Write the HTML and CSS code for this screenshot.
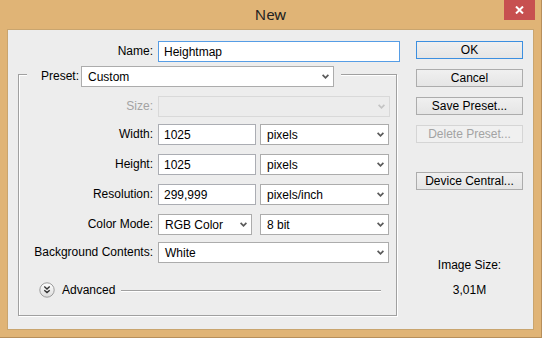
FILE: index.html
```html
<!DOCTYPE html>
<html>
<head>
  <title>New</title>
  <link rel="stylesheet" href="styles.css">
</head>
<body>
  <div class="window">
    <div class="titlebar">
      <span></span>
      <div class="title">New</div>
      <button class="close" title="Close">
        <svg width="9" height="8" viewBox="0 0 9 8"><path d="M1 0.5 L8 7.5 M8 0.5 L1 7.5" stroke="#fff" stroke-width="2"/></svg>
      </button>
    </div>

    <div class="client">
      <div class="form">
        <div class="row">
          <label class="lbl name-lbl">Name:</label>
          <input class="text focus name-input" value="Heightmap">
        </div>

        <fieldset class="group">
          <legend class="preset">
            <label class="preset-lbl">Preset:</label>
            <div class="combo w-preset">
              <span>Custom</span>
              <svg class="chev" width="7" height="5" viewBox="0 0 7 5"><path d="M0.6 0.8 L3.5 3.8 L6.4 0.8" fill="none" stroke="#5a5a5a" stroke-width="1.7"/></svg>
            </div>
          </legend>

          <div class="row r-size">
            <label class="lbl disabled">Size:</label>
            <div class="combo w-full disabled">
              <span></span>
              <svg class="chev" width="7" height="5" viewBox="0 0 7 5"><path d="M0.6 0.8 L3.5 3.8 L6.4 0.8" fill="none" stroke="#c4c4c4" stroke-width="1.7"/></svg>
            </div>
          </div>

          <div class="row r-tight">
            <label class="lbl">Width:</label>
            <input class="text w-num" value="1025">
            <div class="combo w-unit">
              <span>pixels</span>
              <svg class="chev" width="7" height="5" viewBox="0 0 7 5"><path d="M0.6 0.8 L3.5 3.8 L6.4 0.8" fill="none" stroke="#5a5a5a" stroke-width="1.7"/></svg>
            </div>
          </div>

          <div class="row r-wide">
            <label class="lbl">Height:</label>
            <input class="text w-num" value="1025">
            <div class="combo w-unit">
              <span>pixels</span>
              <svg class="chev" width="7" height="5" viewBox="0 0 7 5"><path d="M0.6 0.8 L3.5 3.8 L6.4 0.8" fill="none" stroke="#5a5a5a" stroke-width="1.7"/></svg>
            </div>
          </div>

          <div class="row r-wide">
            <label class="lbl">Resolution:</label>
            <input class="text w-num" value="299,999">
            <div class="combo w-unit">
              <span>pixels/inch</span>
              <svg class="chev" width="7" height="5" viewBox="0 0 7 5"><path d="M0.6 0.8 L3.5 3.8 L6.4 0.8" fill="none" stroke="#5a5a5a" stroke-width="1.7"/></svg>
            </div>
          </div>

          <div class="row r-wide">
            <label class="lbl">Color Mode:</label>
            <div class="combo w-mode">
              <span>RGB Color</span>
              <svg class="chev" width="7" height="5" viewBox="0 0 7 5"><path d="M0.6 0.8 L3.5 3.8 L6.4 0.8" fill="none" stroke="#5a5a5a" stroke-width="1.7"/></svg>
            </div>
            <div class="combo w-unit">
              <span>8 bit</span>
              <svg class="chev" width="7" height="5" viewBox="0 0 7 5"><path d="M0.6 0.8 L3.5 3.8 L6.4 0.8" fill="none" stroke="#5a5a5a" stroke-width="1.7"/></svg>
            </div>
          </div>

          <div class="row r-tight">
            <label class="lbl">Background Contents:</label>
            <div class="combo w-bg">
              <span>White</span>
              <svg class="chev" width="7" height="5" viewBox="0 0 7 5"><path d="M0.6 0.8 L3.5 3.8 L6.4 0.8" fill="none" stroke="#5a5a5a" stroke-width="1.7"/></svg>
            </div>
          </div>

          <div class="advanced">
            <svg class="adv-icon" width="16" height="16" viewBox="0 0 16 16">
              <defs>
                <linearGradient id="advFill" x1="0" y1="0" x2="0" y2="1">
                  <stop offset="0" stop-color="#ffffff"/>
                  <stop offset="1" stop-color="#dcdcdc"/>
                </linearGradient>
              </defs>
              <circle cx="8" cy="8" r="7.2" fill="url(#advFill)" stroke="#9c9c9c" stroke-width="1"/>
              <path d="M5.3 4.6 L8 7 L10.7 4.6 M5.3 8.2 L8 10.6 L10.7 8.2" fill="none" stroke="#333" stroke-width="1.4"/>
            </svg>
            <span class="adv-text">Advanced</span>
            <span class="adv-line"></span>
          </div>
        </fieldset>
      </div>

      <div class="side">
        <button class="btn default">OK</button>
        <button class="btn">Cancel</button>
        <button class="btn">Save Preset...</button>
        <button class="btn" disabled>Delete Preset...</button>
        <button class="btn device">Device Central...</button>
        <div class="img-size">
          <div>Image Size:</div>
          <div>3,01M</div>
        </div>
      </div>
    </div>
  </div>
</body>
</html>
```

FILE: styles.css
```css
* {
  box-sizing: border-box;
}
body {
  margin: 0;
  font-family: "Liberation Sans", Arial, sans-serif;
  font-size: 12px;
  color: #000;
  background: #e0b476;
}
.window {
  width: 542px;
  height: 338px;
  background: #e0b476;
  border-right: 1px solid #b78f5b;
  border-bottom: 1px solid #b78f5b;
}
.titlebar {
  height: 29px;
  display: grid;
  grid-template-columns: 1fr auto 1fr;
  align-items: start;
}
.title {
  font-family: "Noto Sans", "Open Sans", sans-serif;
  font-size: 15px;
  line-height: 20px;
  padding-top: 4px;
  color: #222;
}
.close {
  justify-self: end;
  width: 31px;
  height: 20px;
  margin-right: 6px;
  padding: 0;
  border: none;
  background: #c75050;
  display: flex;
  align-items: center;
  justify-content: center;
}

.client {
  margin-left: 7px;
  width: 527px;
  height: 301px;
  background: #ededed;
  border: 1px solid #c9a56f;
  padding-top: 11px;
  display: flex;
  overflow: hidden;
}
.form {
  width: 408px;
}
.row {
  display: flex;
  align-items: center;
  height: 21px;
}
.lbl {
  width: 139px;
  padding-right: 5px;
  text-align: right;
  white-space: nowrap;
  line-height: 21px;
}
.name-lbl {
  width: 150px;
}
.lbl.disabled {
  color: #a3a3a3;
}

.text {
  height: 21px;
  border: 1px solid #abadb3;
  background: #fff;
  padding: 0 5px;
  font: inherit;
  color: #000;
  outline: none;
}
.text.focus {
  border-color: #569de5;
}
.name-input {
  width: 242px;
}
.w-num {
  width: 98px;
  margin-right: 4px;
}

.combo {
  height: 21px;
  border: 1px solid #acacac;
  background: #fff;
  padding: 0 4px 0 6px;
  display: flex;
  align-items: center;
  justify-content: space-between;
  white-space: nowrap;
}
.combo.disabled {
  background: #ececec;
  border-color: #d9d9d9;
}
.chev {
  flex: none;
}
.w-preset {
  width: 253px;
}
.w-full {
  width: 232px;
}
.w-unit {
  width: 129px;
}
.w-mode {
  width: 94px;
  margin-right: 8px;
}
.w-bg {
  width: 231px;
}

.group {
  margin: 0 0 0 10px;
  width: 379px;
  min-width: 0;
  padding: 0 0 17px 0;
  border: 1px solid #a0a0a0;
  box-shadow: inset 1px 1px 0 #fff, 1px 1px 0 #fff;
}
.preset {
  margin-left: 8px;
  padding: 4px 7px 0 14px;
  display: flex;
  align-items: center;
  background: #ededed;
}
.preset-lbl {
  width: 40px;
  line-height: 21px;
}
.r-size {
  margin-top: 9px;
}
.r-tight {
  margin-top: 7px;
}
.r-wide {
  margin-top: 9px;
}

.advanced {
  display: flex;
  align-items: center;
  height: 16px;
  margin: 19px 15px 0 20px;
}
.adv-icon {
  flex: none;
}
.adv-text {
  margin-left: 7px;
}
.adv-line {
  flex: 1;
  height: 1px;
  margin-left: 6px;
  background: #a0a0a0;
  box-shadow: 0 1px 0 #fff;
}

.side {
  width: 107px;
  display: flex;
  flex-direction: column;
}
.btn {
  height: 18px;
  width: 107px;
  margin-bottom: 10px;
  padding: 0;
  font: inherit;
  color: #000;
  border: 1px solid #acacac;
  background: linear-gradient(#f0f0f0, #e5e5e5);
}
.btn.default {
  border-color: #3c8fe0;
}
.btn:disabled {
  color: #a3a3a3;
  border-color: #d5d5d5;
  background: #f0f0f0;
}
.btn.device {
  margin-top: 19px;
}
.img-size {
  margin-top: 53px;
  text-align: center;
  line-height: 25px;
}
```
